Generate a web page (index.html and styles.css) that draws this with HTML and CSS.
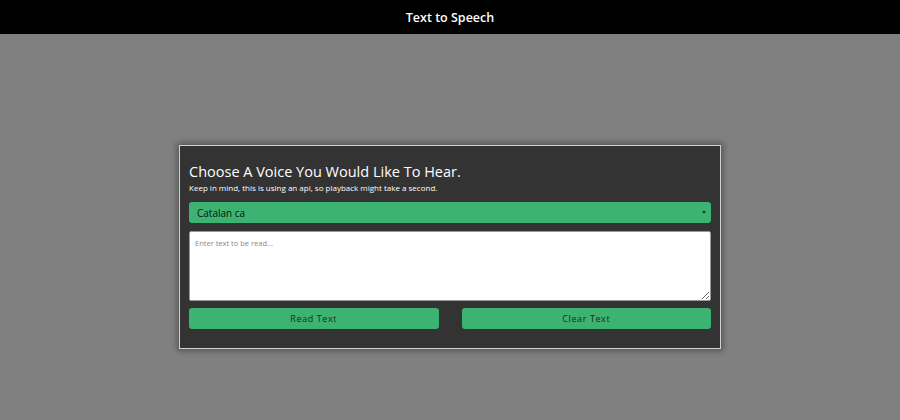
FILE: index.html
```html
<!DOCTYPE html>
<html>
<head>
<meta charset="utf-8">
<link rel="stylesheet" href="styles.css">
</head>
<body>
<header class="topbar">Text to Speech</header>
<main class="stage">
  <section class="card">
    <h1 class="title">Choose A Voice You Would Like To Hear.</h1>
    <p class="note">Keep in mind, this is using an api, so playback might take a second.</p>
    <div class="select-wrap">
      <select class="voice">
        <option>Catalan ca</option>
      </select>
    </div>
    <textarea class="text" placeholder="Enter text to be read..."></textarea>
    <div class="actions">
      <button class="btn">Read Text</button>
      <button class="btn">Clear Text</button>
    </div>
  </section>
</main>
</body>
</html>
```

FILE: styles.css
```css
* { box-sizing: border-box; }
html, body { margin: 0; height: 100%; }
body {
  background: #808080;
  font-family: "Open Sans", "DejaVu Sans", sans-serif;
}
.topbar {
  height: 34px;
  background: #000;
  color: #fff;
  font-size: 12.5px;
  font-weight: 600;
  display: flex;
  align-items: center;
  justify-content: center;
}
.stage {
  display: flex;
  justify-content: center;
  padding-top: 111px;
}
.card {
  width: 542px;
  background: #333;
  border: 1px solid #d0d0d0;
  box-shadow: 0 0 6px 2px rgba(0,0,0,0.35);
  padding: 16px 9px 19px 9px;
}
.title {
  margin: 0;
  color: #fff;
  font-size: 14.5px;
  font-weight: 500;
  line-height: 20px;
}
.note {
  margin: 0 0 8px;
  color: #fff;
  font-size: 8px;
  line-height: 12px;
}
.select-wrap { position: relative; }
.voice {
  width: 100%;
  height: 21px;
  background: #3cb371;
  border: none;
  border-radius: 3px;
  color: #111;
  font-family: inherit;
  font-size: 10px;
  padding: 0 8px;
  -webkit-appearance: none;
  appearance: none;
  display: block;
}
.select-wrap::after {
  content: "";
  position: absolute;
  right: 5px;
  top: 9px;
  border-left: 2.5px solid transparent;
  border-right: 2.5px solid transparent;
  border-top: 3px solid #333;
}
.text {
  display: block;
  width: 100%;
  height: 70px;
  margin-top: 8px;
  border: 1px solid #999;
  border-radius: 2px;
  background: #fff;
  font-family: inherit;
  font-size: 7.5px;
  padding: 6px 5px;
  resize: vertical;
}
.text::placeholder { color: #888; }
.actions {
  display: flex;
  gap: 23px;
  margin-top: 7px;
}
.btn {
  flex: 1;
  height: 21px;
  background: #3cb371;
  border: none;
  border-radius: 3px;
  color: #1e2a22;
  font-family: inherit;
  font-size: 9px;
  letter-spacing: 0.6px;
}
```
